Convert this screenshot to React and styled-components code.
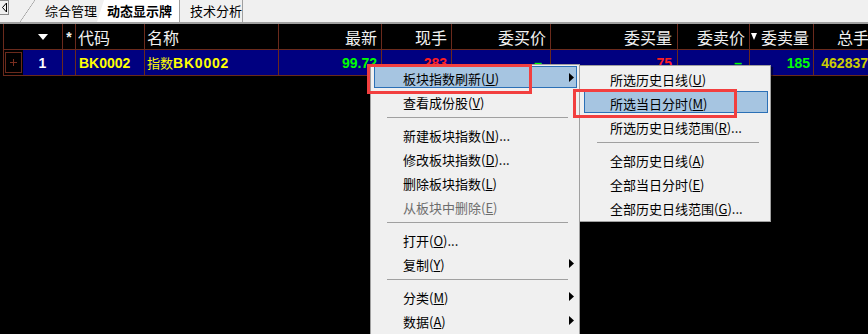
import React from 'react';
import styled, { createGlobalStyle, css } from 'styled-components';

const LINE = '#6a2a1c';
const CJK = '"Noto Sans CJK SC", "Noto Sans", sans-serif';
const LATIN = '"Liberation Sans", Arial, "Noto Sans CJK SC", sans-serif';
const GRID = '19px 40px 13px 69px 134px 103px 70px 99px 127px 72px 64px 60px';

const GlobalStyle = createGlobalStyle`
  html, body { margin: 0; padding: 0; background: #000; }
  #root { width: 868px; height: 334px; }
`;

const Screen = styled.div`
  position: relative;
  width: 868px;
  height: 334px;
  overflow: hidden;
  background: #000;
`;

/* ---------- tab strip ---------- */
const TabBar = styled.div`
  display: flex;
  height: 22px;
  background: #f0f0f0;
  border-bottom: 2px solid #a0a0a0;
  font-family: ${CJK};
  font-size: 13px;
  color: #000;
`;

const ScrollButton = styled.div`
  width: 9px;
  height: 15px;
  box-sizing: border-box;
  border: 1px solid #8a8a8a;
  border-left: none;
  display: flex;
  align-items: center;
  justify-content: center;
`;

const TabSlant = styled.div`
  width: ${p => p.$w}px;
  height: 22px;
  margin-left: ${p => p.$ml || 0}px;
  background: linear-gradient(
    to top left,
    transparent calc(50% - 0.6px),
    #9a9a9a 50%,
    transparent calc(50% + 0.6px)
  );
`;

const Tab = styled.div`
  display: flex;
  align-items: center;
  height: 22px;
  box-sizing: border-box;
  padding: 0 ${p => p.$pr || 0}px 2px ${p => p.$pl || 0}px;
  font-weight: ${p => (p.$active ? 700 : 400)};
  background: ${p => (p.$active ? '#ffffff' : 'transparent')};
  border-right: ${p => (p.$edge ? '1px solid #a0a0a0' : 'none')};
  white-space: nowrap;
  ${p =>
    p.$active &&
    css`
      clip-path: polygon(7px 0, 100% 0, 100% 100%, 0 100%);
    `}
`;

/* ---------- quote table ---------- */
const Row = styled.div`
  display: grid;
  grid-template-columns: ${GRID};
  height: 26px;
  box-sizing: border-box;
  margin-left: 3px;
  border-left: 1px solid ${LINE};
  border-bottom: 1px solid ${LINE};
`;

const Cell = styled.div`
  display: flex;
  align-items: center;
  justify-content: ${p =>
    p.$align === 'left' ? 'flex-start' : p.$align === 'center' ? 'center' : p.$align === 'between' ? 'space-between' : 'flex-end'};
  box-sizing: border-box;
  padding: 0 ${p => (p.$pr ?? 4)}px 0 ${p => p.$pl ?? 0}px;
  border-right: ${p => (p.$noline ? 'none' : `1px solid ${LINE}`)};
  background: ${p => p.$bg || 'transparent'};
  color: ${p => p.$color || '#f2f2f2'};
  white-space: nowrap;
  overflow: hidden;
`;

const HeadCell = styled(Cell)`
  font-family: ${CJK};
  font-size: 16px;
  font-weight: 400;
`;

const Star = styled(HeadCell)`
  font-family: ${LATIN};
  font-size: 14px;
  font-weight: 700;
`;

const DataCell = styled(Cell)`
  font-family: ${LATIN};
  font-size: 14px;
  font-weight: 700;
  background: ${p => p.$bg || '#000080'};
`;

const NamePart = styled.span`
  font-family: ${CJK};
  font-size: 13px;
  font-weight: 400;
`;

const NameCode = styled.span`
  letter-spacing: 0.8px;
`;

const PlusBox = styled.div`
  width: 17px;
  height: 21px;
  margin-left: 1px;
  box-sizing: border-box;
  border: 1px solid ${LINE};
  display: flex;
  align-items: center;
  justify-content: center;
`;

/* ---------- context menus ---------- */
const Menu = styled.div`
  position: absolute;
  left: ${p => p.$x}px;
  top: ${p => p.$y}px;
  width: ${p => p.$w}px;
  box-sizing: border-box;
  padding: 0 2px ${p => p.$pb || 2}px ${p => p.$pl}px;
  background: #f0f0f0;
  border: 1px solid #a0a0a0;
  box-shadow: 2px 2px 1px rgba(0, 0, 0, 0.45);
  font-family: ${CJK};
  font-size: 13px;
  color: #000;
  z-index: ${p => p.$z};
`;

const MenuItem = styled.div`
  display: flex;
  align-items: center;
  height: 24px;
  box-sizing: border-box;
  padding: 2px 3px 0 ${p => p.$indent}px;
  border-top: 1px solid transparent;
  border-bottom: 1px solid transparent;
  background-clip: padding-box;
  color: ${p => (p.$disabled ? '#6d6d6d' : '#000')};
  white-space: nowrap;
  ${p =>
    p.$hot &&
    css`
      background-color: #a6c5e1;
      box-shadow: inset 0 0 0 1px #2b70b6;
    `}
`;

const MenuSeparator = styled.div`
  height: 1px;
  background: #a0a0a0;
  margin: 4px 9px 4px 13px;
`;

const SubArrow = styled.svg`
  margin-left: auto;
  margin-top: -2px;
`;

const Annotation = styled.div`
  position: absolute;
  left: ${p => p.$x}px;
  top: ${p => p.$y}px;
  width: ${p => p.$w}px;
  height: ${p => p.$h}px;
  box-sizing: border-box;
  border: 3px solid #f23f3f;
  z-index: 10;
  pointer-events: none;
`;

/* ---------- drawings ---------- */
const LeftScrollIcon = () => (
  <svg width="7" height="11" viewBox="0 0 7 11">
    <polygon points="5.5,1 1.5,5.5 5.5,10" fill="none" stroke="#000" strokeWidth="1" />
  </svg>
);

const SortDown = ({ w = 10, h = 6 }) => (
  <svg width={w} height={h} viewBox={`0 0 ${w} ${h}`}>
    <polygon points={`0,0 ${w},0 ${w / 2},${h}`} fill="#ffffff" />
  </svg>
);

const PlusIcon = () => (
  <svg width="7" height="7" viewBox="0 0 7 7">
    <rect x="3" y="0" width="1" height="7" fill="#7a2e1f" />
    <rect x="0" y="3" width="7" height="1" fill="#7a2e1f" />
  </svg>
);

const Arrow = () => (
  <SubArrow width="5" height="9" viewBox="0 0 5 9">
    <polygon points="0,0 5,4.5 0,9" fill="#000" />
  </SubArrow>
);

const Label = ({ text, keyChar, tail = '' }) => (
  <span>
    {text}(<u>{keyChar}</u>){tail}
  </span>
);

const mainMenu = [
  { text: '板块指数刷新', key: 'U', sub: true, hot: true },
  { text: '查看成份股', key: 'V' },
  { sep: true },
  { text: '新建板块指数', key: 'N', tail: '...' },
  { text: '修改板块指数', key: 'D', tail: '...' },
  { text: '删除板块指数', key: 'L' },
  { text: '从板块中删除', key: 'E', disabled: true },
  { sep: true },
  { text: '打开', key: 'O', tail: '...' },
  { text: '复制', key: 'Y', sub: true },
  { sep: true },
  { text: '分类', key: 'M', sub: true },
  { text: '数据', key: 'A', sub: true },
];

const subMenu = [
  { text: '所选历史日线', key: 'U' },
  { text: '所选当日分时', key: 'M', hot: true },
  { text: '所选历史日线范围', key: 'R', tail: '...' },
  { sep: true },
  { text: '全部历史日线', key: 'A' },
  { text: '全部当日分时', key: 'E' },
  { text: '全部历史日线范围', key: 'G', tail: '...' },
];

const renderItems = (items, indent) =>
  items.map((it, i) =>
    it.sep ? (
      <MenuSeparator key={i} />
    ) : (
      <MenuItem key={i} $indent={indent} $hot={it.hot} $disabled={it.disabled}>
        <Label text={it.text} keyChar={it.key} tail={it.tail} />
        {it.sub && <Arrow />}
      </MenuItem>
    )
  );

export default function App() {
  return (
    <Screen>
      <GlobalStyle />
      <TabBar>
        <ScrollButton>
          <LeftScrollIcon />
        </ScrollButton>
        <TabSlant $w={15} $ml={11} />
        <Tab $pl={10}>综合管理</Tab>
        <Tab $pl={10} $pr={7} $active $edge>
          动态显示牌
        </Tab>
        <Tab $pl={10} $edge>
          技术分析
        </Tab>
      </TabBar>

      <Row>
        <HeadCell $noline />
        <HeadCell $align="center" $pr={0}>
          <SortDown />
        </HeadCell>
        <Star $align="center" $pr={0}>*</Star>
        <HeadCell $align="left" $pl={2}>代码</HeadCell>
        <HeadCell $align="left" $pl={2}>名称</HeadCell>
        <HeadCell>最新</HeadCell>
        <HeadCell>现手</HeadCell>
        <HeadCell>委买价</HeadCell>
        <HeadCell $pr={5}>委买量</HeadCell>
        <HeadCell>委卖价</HeadCell>
        <HeadCell $align="between" $pl={1}>
          <SortDown w={6} h={7} />
          <span>委卖量</span>
        </HeadCell>
        <HeadCell>总手</HeadCell>
      </Row>

      <Row>
        <DataCell $noline $bg="#000" $align="left" $pr={0}>
          <PlusBox>
            <PlusIcon />
          </PlusBox>
        </DataCell>
        <DataCell $align="center" $pr={0} $color="#ffffff">1</DataCell>
        <DataCell />
        <DataCell $align="left" $pl={3} $color="#ffff00">BK0002</DataCell>
        <DataCell $align="left" $pl={2} $color="#ffff00">
          <NamePart>指数</NamePart>
          <NameCode>BK0002</NameCode>
        </DataCell>
        <DataCell $color="#00ff00">99.72</DataCell>
        <DataCell $color="#ff1f1f">283</DataCell>
        <DataCell $color="#00ff00" $pr={8}>–</DataCell>
        <DataCell $color="#ff1f1f" $pr={5}>75</DataCell>
        <DataCell $color="#00ff00" $pr={7}>–</DataCell>
        <DataCell $color="#00ff00" $pr={3}>185</DataCell>
        <DataCell $color="#cccc00" $pr={5}>462837</DataCell>
      </Row>

      <Menu $x={370} $y={64} $w={210} $pl={3} $pb={24} $z={2}>
        {renderItems(mainMenu, 29)}
      </Menu>

      <Menu $x={579} $y={65} $w={192} $pl={4} $z={3}>
        {renderItems(subMenu, 26)}
      </Menu>

      <Annotation $x={367} $y={64} $w={165} $h={30} />
      <Annotation $x={573} $y={89} $w={164} $h={29} />
    </Screen>
  );
}
